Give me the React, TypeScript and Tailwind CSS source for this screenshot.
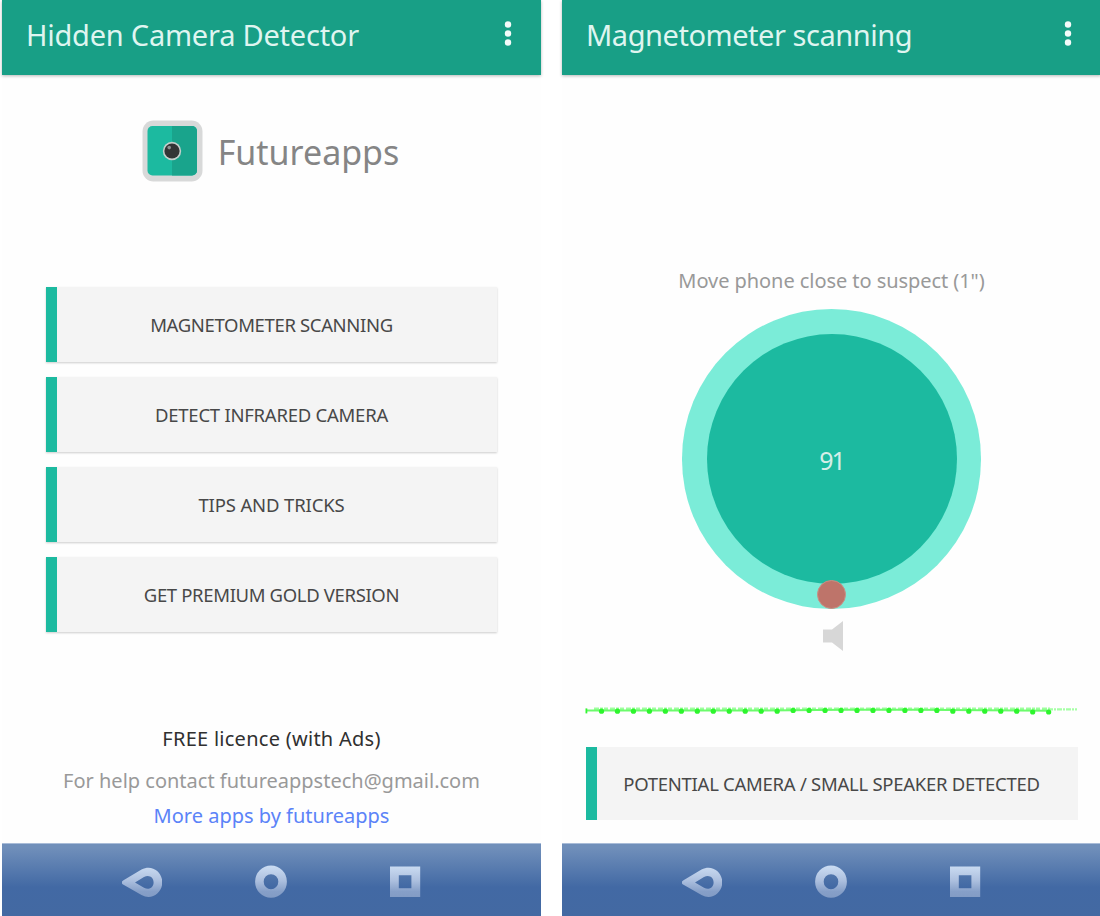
import { ReactNode } from "react";

const MENU_ITEMS = [
  { label: "MAGNETOMETER SCANNING", tracking: "tracking-[-0.35px]" },
  { label: "DETECT INFRARED CAMERA", tracking: "tracking-[-0.25px]" },
  { label: "TIPS AND TRICKS", tracking: "tracking-[-0.15px]" },
  { label: "GET PREMIUM GOLD VERSION", tracking: "tracking-[-0.35px]" },
];

// [offset, y] of each sample dot on the signal line
const SAMPLES = Array.from({ length: 29 }, (_, i) => [
  16.5 + i * 15.97,
  i > 26 ? 8 : i > 11 && i < 22 ? 6.4 : 7.2,
]);

interface PhoneProps {
  title: string;
  titleClass: string;
  children: ReactNode;
}

function Header({ title, titleClass }: { title: string; titleClass: string }) {
  return (
    <header className="flex h-[75px] shrink-0 items-start justify-between bg-[#189f86] pl-6 pr-[26px] shadow-[0_1px_3px_rgba(0,0,0,0.28)]">
      <h1
        className={`mt-[15px] whitespace-nowrap text-[29px] leading-10 text-[#dff5f0] ${titleClass}`}
      >
        {title}
      </h1>
      <svg className="mt-5 h-7 w-[14px]" viewBox="0 0 14 28" fill="#f4fbfa">
        <circle cx="7" cy="4.5" r="3.2" />
        <circle cx="7" cy="13.5" r="3.2" />
        <circle cx="7" cy="22.5" r="3.2" />
      </svg>
    </header>
  );
}

function NavBar() {
  return (
    <nav className="flex h-[73px] shrink-0 items-center gap-[90px] border-t border-[#a9bcd8] bg-linear-to-b from-[#708fba] from-5% via-[#4269a4] via-60% to-[#4369a2] pl-[120px] pt-1">
      <svg className="h-10 w-10" viewBox="0 0 40 40">
        <defs>
          <linearGradient id="nav" gradientUnits="userSpaceOnUse" x1="0" y1="4" x2="0" y2="36">
            <stop offset="0" stopColor="#cbdcf2" />
            <stop offset="0.45" stopColor="#adc0df" />
            <stop offset="0.8" stopColor="#869fc8" />
            <stop offset="1" stopColor="#829bc4" />
          </linearGradient>
        </defs>
        <path
          d="M1.5 18.2 L19.5 7.5 C30 1.8 40.3 10 40.3 20.3 C40.3 30.6 30 38.8 19.5 33.1 L1.5 22.8 C-1 21.2 -1 19.8 1.5 18.2 Z M13 20.4 L22 25.8 C27.5 28.4 31.6 25 31.6 20.4 C31.6 15.8 27.5 12.4 22 15 Z"
          fill="url(#nav)"
          fillRule="evenodd"
        />
      </svg>
      <svg className="h-10 w-10" viewBox="0 0 40 40">
        <ellipse cx="19" cy="19.7" rx="11.6" ry="11.8" fill="none" stroke="url(#nav)" strokeWidth="8.6" />
      </svg>
      <svg className="h-10 w-10" viewBox="0 0 40 40">
        <path d="M12.4 8.8h21.4v21.8H12.4z" fill="none" stroke="url(#nav)" strokeWidth="8.8" />
      </svg>
    </nav>
  );
}

function Phone({ title, titleClass, children }: PhoneProps) {
  return (
    <section className="flex h-[916px] w-[539px] shrink-0 flex-col bg-[#fefefe]">
      <Header title={title} titleClass={titleClass} />
      <main className="flex min-h-0 flex-1 flex-col items-center">{children}</main>
      <NavBar />
    </section>
  );
}

function AppLogo() {
  return (
    <svg className="h-[62px] w-[62px]" viewBox="0 0 62 62">
      <rect x="0.5" y="0.5" width="60" height="61" rx="11" fill="#d8d9d9" />
      <rect x="5.5" y="6" width="49.5" height="49.5" rx="5" fill="#1cbaa0" />
      <path d="M30 6H50a5 5 0 0 1 5 5v39.5a5 5 0 0 1-5 5H30z" fill="#19a48c" />
      <circle cx="30" cy="31" r="9.2" fill="#c4cfcc" />
      <circle cx="30" cy="31" r="7.6" fill="#333536" />
      <circle cx="27.2" cy="27.6" r="1.8" fill="#8d9191" />
    </svg>
  );
}

function SignalLine() {
  return (
    <svg className="mt-[53px] h-4 w-[493px] shrink-0" viewBox="0 0 493 16">
      <path d="M9 4.8H465" stroke="#9dff9d" strokeWidth="2.8" strokeDasharray="5 1 3 1 4 2" />
      <path d="M463 5.4H492" stroke="#a5ffa5" strokeWidth="2.2" strokeDasharray="5 1 2 1" />
      <path d="M1 6.6H180L260 5.8H330L465 6.8" fill="none" stroke="#6cfb6c" strokeWidth="2" />
      <path d="M1.4 4.4v5" stroke="#32f632" strokeWidth="1.8" />
      {SAMPLES.map(([x, y]) => (
        <circle key={x} cx={x} cy={y} r="2.6" fill="#2df52d" />
      ))}
    </svg>
  );
}

export default function App() {
  return (
    <div className="flex h-[916px] w-[1100px] gap-[21px] overflow-hidden bg-white pl-0.5 font-['Noto_Sans','Open_Sans',sans-serif]">
      <Phone title="Hidden Camera Detector" titleClass="tracking-[-0.23px]">
        <div className="mt-[45px] flex h-[62px] items-center gap-[14px] pr-[2px]">
          <AppLogo />
          <span className="whitespace-nowrap pt-0.5 text-[34px] leading-[60px] text-[#858585]">
            Futureapps
          </span>
        </div>
        <div className="mt-[105px] flex w-[451px] flex-col gap-[15px]">
          {MENU_ITEMS.map((item) => (
            <button
              key={item.label}
              className={`flex h-[75px] items-center justify-center whitespace-nowrap border-l-11 border-[#1cbaa0] bg-[#f4f4f4] pr-[11px] text-[18.5px] text-[#484848] shadow-[0_1px_2px_rgba(0,0,0,0.2)] ${item.tracking}`}
            >
              {item.label}
            </button>
          ))}
        </div>
        <p className="mt-[92px] whitespace-nowrap text-[20px] leading-[30px] tracking-[0.27px] text-[#303030]">
          FREE licence (with Ads)
        </p>
        <p className="mt-3 whitespace-nowrap text-[20px] leading-[30px] text-[#999999]">
          For help contact futureappstech@gmail.com
        </p>
        <a className="mt-[5px] whitespace-nowrap text-[20px] leading-[30px] text-[#5b83f8]">
          More apps by futureapps
        </a>
      </Phone>

      <Phone title="Magnetometer scanning" titleClass="tracking-[-0.46px]">
        <p className="mt-[191px] whitespace-nowrap text-[20px] leading-[30px] tracking-[-0.06px] text-[#999999]">
          Move phone close to suspect (1")
        </p>
        <div className="relative mt-[13px] flex h-[300px] w-[299px] shrink-0 items-center justify-center rounded-full bg-[#7becd8]">
          <div className="flex h-[250px] w-[250px] items-center justify-center rounded-full bg-[#1cbaa0] pt-[3px] text-[25px] tracking-[-2px] text-[#d5eee8]">
            91
          </div>
          <span className="absolute bottom-0 left-[135px] h-[29px] w-[29px] rounded-full border border-[#c98f84] bg-[#be746a]" />
        </div>
        <svg className="ml-[2px] mt-3 h-[30px] w-5 shrink-0" viewBox="0 0 20 30" fill="#d7d7d7">
          <path d="M0 8.5h9L20 0v30L9 21.5H0z" />
        </svg>
        <SignalLine />
        <div className="mt-[27px] flex h-[73px] w-[492px] shrink-0 items-center justify-center whitespace-nowrap border-l-11 border-[#1cbaa0] bg-[#f4f4f4] pr-[11px] text-[18.5px] tracking-[-0.27px] text-[#484848]">
          POTENTIAL CAMERA / SMALL SPEAKER DETECTED
        </div>
      </Phone>
    </div>
  );
}
